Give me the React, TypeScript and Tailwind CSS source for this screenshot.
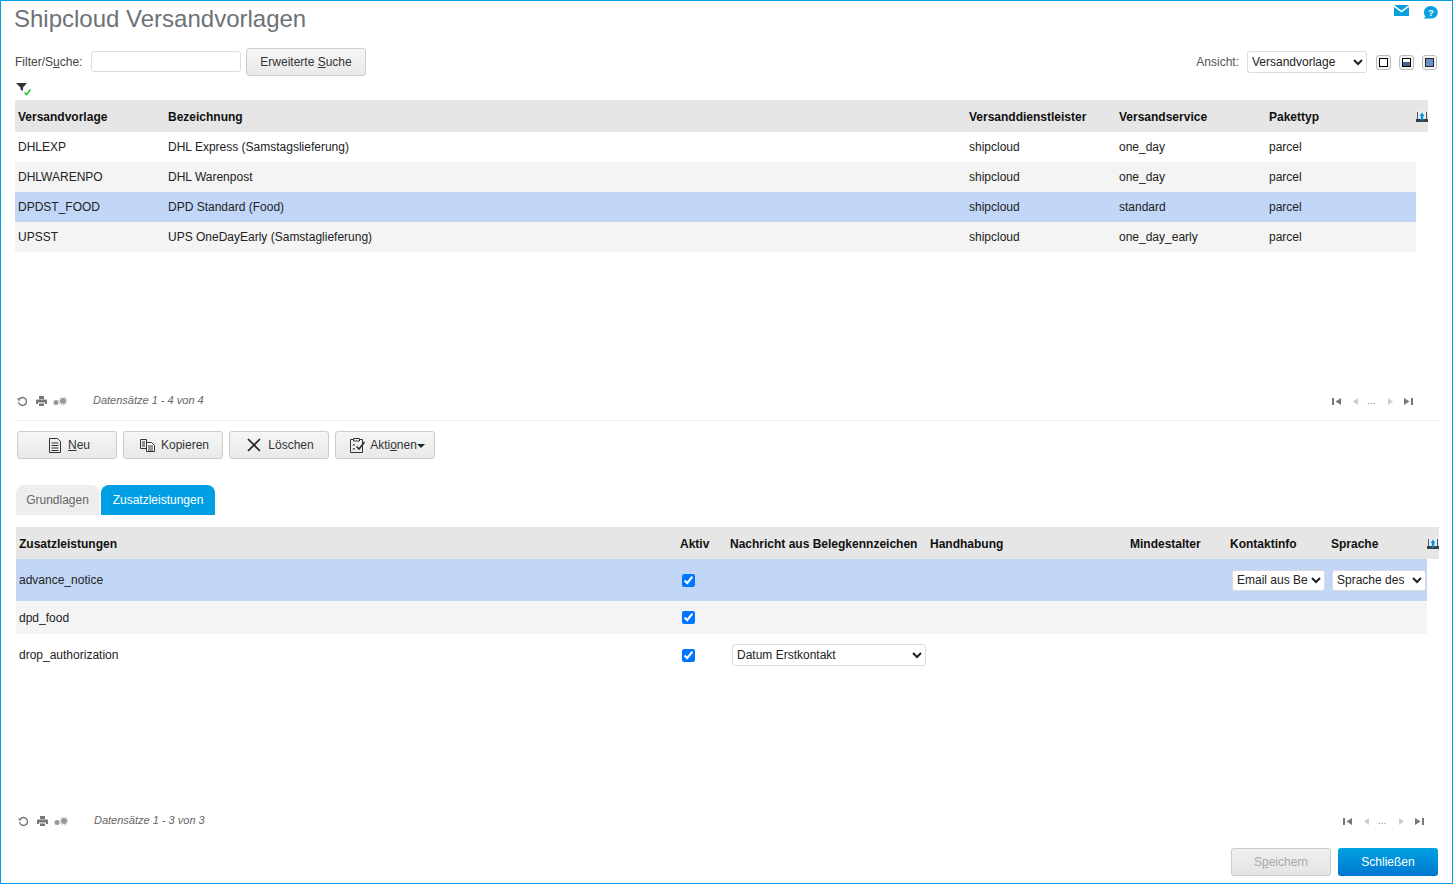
import type { ReactNode } from 'react'

const TOP_GRID = 'grid grid-cols-[150px_801px_150px_150px_1fr] items-center'
const SUB_GRID = 'grid grid-cols-[661px_50px_200px_200px_100px_101px_1fr] items-center'

const TEMPLATES = [
  ['DHLEXP', 'DHL Express (Samstagslieferung)', 'shipcloud', 'one_day', 'parcel'],
  ['DHLWARENPO', 'DHL Warenpost', 'shipcloud', 'one_day', 'parcel'],
  ['DPDST_FOOD', 'DPD Standard (Food)', 'shipcloud', 'standard', 'parcel'],
  ['UPSST', 'UPS OneDayEarly (Samstaglieferung)', 'shipcloud', 'one_day_early', 'parcel'],
]

function ColumnsIcon() {
  return (
    <svg width="12" height="11" viewBox="0 0 12 11" className="-mt-px shrink-0">
      <rect x="1" y="0" width="10" height="8.500" fill="#e8edf2" />
      <path d="M1.500 1v8M10.500 1v8" stroke="#4d555d" />
      <rect x="0" y="8" width="12" height="3" fill="#3a4148" />
      <path d="M6 1.500 8.500 5H7.200v4.500H4.800V5H3.500z" fill="#0a8fd8" />
    </svg>
  )
}

function RecordBar({ text }: { text: string }) {
  return (
    <div className="flex h-5 items-center">
      <div className="flex w-[78px] items-center pl-[2px] pt-[2px] text-[#777]">
        <svg width="11" height="11" viewBox="0 0 11 11" fill="none" stroke="currentColor" strokeWidth="1.4">
          <path d="M2.200 3.200A4 4 0 1 1 1.500 6" />
          <path d="M0.600 1.500v3h3" fill="currentColor" stroke="none" />
        </svg>
        <svg width="11" height="10" viewBox="0 0 11 10" fill="currentColor" className="ml-[8px]">
          <path d="M3 0h5v3H3zM1 3.500h9a1 1 0 0 1 1 1V8H9V6.500H2V8H0V4.500a1 1 0 0 1 1-1zM3 7.500h5V10H3z" />
        </svg>
        <svg width="14" height="9" viewBox="0 0 14 9" fill="#999" className="ml-[6px]">
          <circle cx="3" cy="5.500" r="2.500" />
          <circle cx="10" cy="4" r="3" />
          <circle cx="10" cy="4" r="4" fill="none" stroke="#999" strokeWidth="0.9" strokeDasharray="1.200 1.200" />
        </svg>
      </div>
      <span className="text-[11px] italic text-[#666]">{text}</span>
    </div>
  )
}

function Pager() {
  return (
    <div className="flex items-center pt-[2px] text-[#777]">
      <svg width="9" height="7" viewBox="0 0 9 7" fill="currentColor">
        <path d="M0 0h2v7H0zM9 0v7L3.500 3.500z" />
      </svg>
      <svg width="5" height="7" viewBox="0 0 5 7" fill="#ccc" className="ml-[12px]">
        <path d="M5 0v7L0 3.500z" />
      </svg>
      <span className="ml-[9px] w-[10px] text-[10px] leading-[10px] text-[#888]">...</span>
      <svg width="5" height="7" viewBox="0 0 5 7" fill="#ccc" className="ml-[11px]">
        <path d="M0 0v7l5-3.500z" />
      </svg>
      <svg width="9" height="7" viewBox="0 0 9 7" fill="currentColor" className="ml-[11px]">
        <path d="M0 0v7l5.500-3.500zM7 0h2v7H7z" />
      </svg>
    </div>
  )
}

function ActionButton({ icon, children }: { icon: ReactNode; children: ReactNode }) {
  return (
    <button className="flex h-[28px] w-[100px] items-center justify-center gap-[7px] rounded-[3px] border border-[#ccc] bg-gradient-to-b from-[#f6f6f6] to-[#e9e9e9] pl-[3px] text-[#333]">
      {icon}
      <span>{children}</span>
    </button>
  )
}

function ViewToggle({ children }: { children: ReactNode }) {
  return (
    <div className="flex size-[15px] items-center justify-center rounded-[3px] border border-[#bbb] bg-[#f5f5f5]">
      {children}
    </div>
  )
}

export default function App() {
  return (
    <div className="flex h-[884px] w-[1453px] flex-col overflow-hidden border border-[#00a0e3] bg-white pl-[14px] font-['Liberation_Sans',Arial,sans-serif] text-[12px] text-[#222]">
      {/* Title */}
      <div className="flex h-[47px] justify-between pr-[14px]">
        <h1 className="-ml-px pt-[3px] text-[24px] leading-[30px] text-[#6d7278]">Shipcloud Versandvorlagen</h1>
        <div className="flex gap-[14px] pt-[4px]">
          <svg width="15" height="11" viewBox="0 0 15 11">
            <path d="M0 0h15L7.500 5.500z" fill="#0a9fe0" />
            <path d="M0 2l7.500 5.500L15 2v9H0z" fill="#0a9fe0" />
          </svg>
          <svg width="15" height="14" viewBox="0 0 15 14" className="mt-px">
            <path d="M8 0a6.800 6.300 0 0 1 0 12.600H.6l2-2.200A6.800 6.300 0 0 1 8 0z" fill="#0a9fe0" />
            <text x="8" y="10" textAnchor="middle" fontSize="9.500" fontWeight="700" fill="#fff" fontFamily="Liberation Sans">?</text>
          </svg>
        </div>
      </div>

      {/* Filter row */}
      <div className="flex h-[28px] items-center pr-[15px]">
        <span className="w-[76px] text-[#444]">
          Filter/S<u>u</u>che:
        </span>
        <input className="-mt-px h-[21px] w-[150px] rounded-[3px] border border-[#ddd] bg-white" />
        <button className="ml-[5px] h-[28px] w-[120px] rounded-[3px] border border-[#ccc] bg-gradient-to-b from-[#f6f6f6] to-[#e9e9e9] text-[#333]">
          Erweiterte <u>S</u>uche
        </button>
        <span className="ml-auto text-[#555]">Ansicht:</span>
        <select defaultValue="Versandvorlage" className="ml-[8px] h-[22px] w-[120px] rounded-[3px] border border-[#ddd] bg-white text-[#222]">
          <option>Versandvorlage</option>
        </select>
        <div className="ml-[9px] flex gap-[8px]">
          <ViewToggle>
            <div className="size-[9px] border border-black bg-white" />
          </ViewToggle>
          <ViewToggle>
            <div className="flex size-[9px] flex-col border border-black bg-white">
              <div className="h-[3px]" />
              <div className="flex-1 bg-[#47608f]" />
            </div>
          </ViewToggle>
          <ViewToggle>
            <div className="size-[9px] border border-[#222] bg-[#6d8fcf]" />
          </ViewToggle>
        </div>
      </div>

      {/* Filter state */}
      <div className="flex h-[24px] items-center pl-[1px] pt-[1px]">
        <svg width="17" height="14" viewBox="0 0 17 14">
          <path d="M0 1h11L7 5.500V9L4.500 7.500V5.500z" fill="#333" />
          <path d="M8.500 10.500l2 2 4-5" fill="none" stroke="#22c62a" strokeWidth="1.600" />
        </svg>
      </div>

      {/* Shipping templates */}
      <div className="h-[290px] w-[1413px]">
        <div className={`${TOP_GRID} h-[32px] bg-[#e6e6e6] pt-px font-bold text-[#111]`}>
          <div className="pl-[3px]">Versandvorlage</div>
          <div className="pl-[3px]">Bezeichnung</div>
          <div className="pl-[3px]">Versanddienstleister</div>
          <div className="pl-[3px]">Versandservice</div>
          <div className="flex items-center justify-between pl-[3px]">
            Pakettyp
            <ColumnsIcon />
          </div>
        </div>
        {TEMPLATES.map((row, i) => (
          <div
            key={row[0]}
            className={`${TOP_GRID} h-[30px] w-[1401px] ${i === 2 ? 'bg-[#c2d7f7]' : i % 2 === 1 ? 'bg-[#f4f4f4]' : 'bg-white'}`}
          >
            <div className="pl-[3px]">{row[0]}</div>
            <div className="pl-[3px]">{row[1]}</div>
            <div className="pl-[3px]">{row[2]}</div>
            <div className="pl-[3px]">{row[3]}</div>
            <div className="pl-[3px]">{row[4]}</div>
          </div>
        ))}
      </div>

      <div className="flex h-[20px] items-center justify-between pr-[39px]">
        <RecordBar text="Datensätze 1 - 4 von 4" />
        <Pager />
      </div>

      <div className="mt-[10px] h-px w-[1424px] border-t border-dotted border-[#e4e4e4]" />

      {/* Actions */}
      <div className="ml-[2px] mt-[10px] flex gap-[6px]">
        <ActionButton
          icon={
            <svg width="12" height="15" viewBox="0 0 12 15" fill="none" stroke="#333" className="ml-[2px]">
              <path d="M.5.5h8l3 3v11H.5zM2.500 5h7M2.500 7.500h7M2.500 10h7M2.500 12.500h7" />
            </svg>
          }
        >
          <u>N</u>eu
        </ActionButton>
        <ActionButton
          icon={
            <svg width="16" height="13" viewBox="0 0 16 13" fill="none" stroke="#333" className="-mr-[2px]">
              <path d="M.5.5h6v9h-6zM2 3h3M2 5h3M2 7h3" />
              <path d="M6.500 3.500h5l3 3v6h-8zM8 7h5M8 9h5M8 11h5" fill="#fff" />
            </svg>
          }
        >
          Kopieren
        </ActionButton>
        <ActionButton
          icon={
            <svg width="14" height="14" viewBox="0 0 14 14" fill="none" stroke="#222" strokeWidth="1.700">
              <path d="M1 1l12 12M13 1 1 13" />
            </svg>
          }
        >
          Löschen
        </ActionButton>
        <ActionButton
          icon={
            <svg width="15" height="16" viewBox="0 0 15 16" fill="none" stroke="#333" className="-mr-[2px] ml-[2px]">
              <path d="M3 2.500H.5v13h12v-13H10M3.500 1.500h6v2.500h-6z" />
              <path d="M3 7l1.500 1.500M4.500 7 3 8.500M3 11l1.500 1.500M4.500 11 3 12.500" />
              <path d="M6.500 9.500l2.500 2.500 5.500-7" strokeWidth="1.600" />
            </svg>
          }
        >
          Akti<u>o</u>nen<span className="inline-block border-x-[4px] border-t-[4px] border-x-transparent border-t-[#222] align-middle" />
        </ActionButton>
      </div>

      {/* Tabs */}
      <div className="ml-px mt-[26px] flex gap-[2px]">
        <div className="flex h-[30px] w-[83px] items-center justify-center rounded-t-[8px] bg-[#eeeeee] text-[#666]">Grundlagen</div>
        <div className="flex h-[30px] w-[114px] items-center justify-center rounded-t-[8px] bg-[#009fe3] text-white">Zusatzleistungen</div>
      </div>

      {/* Additional services */}
      <div className="ml-px mt-[12px] h-[283px] w-[1423px]">
        <div className={`${SUB_GRID} h-[32px] bg-[#e6e6e6] pt-px font-bold text-[#111]`}>
          <div className="pl-[3px]">Zusatzleistungen</div>
          <div className="pl-[3px]">Aktiv</div>
          <div className="pl-[3px]">Nachricht aus Belegkennzeichen</div>
          <div className="pl-[3px]">Handhabung</div>
          <div className="pl-[3px]">Mindestalter</div>
          <div className="pl-[3px]">Kontaktinfo</div>
          <div className="flex items-center justify-between pl-[3px]">
            Sprache
            <ColumnsIcon />
          </div>
        </div>
        <div className={`${SUB_GRID} h-[42px] w-[1411px] bg-[#c2d7f7]`}>
          <div className="pl-[3px]">advance_notice</div>
          <div className="pl-[5px]">
            <input type="checkbox" defaultChecked className="block size-[13px]" />
          </div>
          <div />
          <div />
          <div />
          <div className="pl-[5px]">
            <select defaultValue="Email aus Beleg" className="block h-[21px] w-[93px] rounded-[3px] border border-[#ddd] bg-white">
              <option>Email aus Beleg</option>
            </select>
          </div>
          <div>
            <select defaultValue="Sprache des" className="ml-[4px] block h-[21px] w-[94px] rounded-[3px] border border-[#ddd] bg-white">
              <option>Sprache des</option>
            </select>
          </div>
        </div>
        <div className={`${SUB_GRID} h-[33px] w-[1411px] bg-[#f4f4f4]`}>
          <div className="pl-[3px]">dpd_food</div>
          <div className="pl-[5px]">
            <input type="checkbox" defaultChecked className="block size-[13px]" />
          </div>
        </div>
        <div className={`${SUB_GRID} h-[42px] w-[1411px]`}>
          <div className="pl-[3px]">drop_authorization</div>
          <div className="pl-[5px]">
            <input type="checkbox" defaultChecked className="block size-[13px]" />
          </div>
          <div className="pl-[5px]">
            <select defaultValue="Datum Erstkontakt" className="block h-[22px] w-[194px] rounded-[3px] border border-[#ddd] bg-white">
              <option>Datum Erstkontakt</option>
            </select>
          </div>
        </div>
      </div>

      <div className="ml-px flex h-[20px] items-center justify-between pr-[28px]">
        <RecordBar text="Datensätze 1 - 3 von 3" />
        <Pager />
      </div>

      {/* Footer buttons */}
      <div className="mt-[18px] flex justify-end gap-[7px] pr-[14px]">
        <button className="h-[28px] w-[100px] rounded-[3px] border border-[#ccc] bg-gradient-to-b from-[#f0f0f0] to-[#e4e4e4] text-[#aaa]">
          S<u>p</u>eichern
        </button>
        <button className="h-[28px] w-[100px] rounded-[3px] bg-gradient-to-b from-[#00a0e0] to-[#0078d0] text-white">Schließen</button>
      </div>
    </div>
  )
}
